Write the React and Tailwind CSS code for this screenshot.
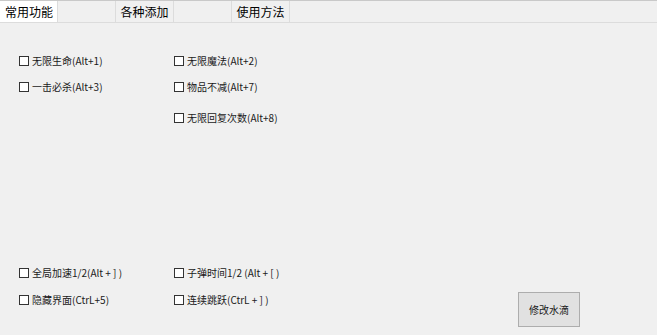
const font = { fontFamily: '"Noto Sans CJK SC", "Noto Sans", sans-serif' }

function Check({ label, className = '' }) {
  return (
    <label
      className={`flex h-[14px] items-center gap-[3px] text-[10px] leading-none text-[#1a1a1a] ${className}`}
    >
      <span className="h-[10px] w-[10px] shrink-0 border border-[#333] bg-white" />
      <span className="whitespace-nowrap">{label}</span>
    </label>
  )
}

const tabs = ['常用功能', '', '各种添加', '', '使用方法']

export default function App() {
  return (
    <div
      className="flex h-[335px] w-[657px] flex-col overflow-hidden bg-[#f0f0f0]"
      style={font}
    >
      <div className="flex h-[23px] shrink-0 border-b border-[#dcdcdc] border-t border-t-[#c9c9c9] bg-[#f0f0f0]">
        {tabs.map((t, i) => (
          <div
            key={i}
            className={`flex h-full w-[58px] items-center border-r border-[#dcdcdc] text-[12px] text-black ${
              i === 0 ? 'bg-white pl-[5px]' : 'justify-center'
            }`}
          >
            {t}
          </div>
        ))}
      </div>

      <div className="flex flex-1 flex-col px-[19px] pt-[31px]">
        <div className="grid grid-cols-[155px_1fr] gap-y-[12px]">
          <Check label="无限生命(Alt+1)" />
          <Check label="无限魔法(Alt+2)" />
          <Check label="一击必杀(Alt+3)" />
          <Check label="物品不减(Alt+7)" />
          <div />
          <Check label="无限回复次数(Alt+8)" className="mt-[5px]" />
        </div>

        <div className="mt-[141px] grid grid-cols-[155px_1fr] gap-y-[13px]">
          <Check label="全局加速1/2(Alt + ] )" />
          <Check label="子弹时间1/2 (Alt + [ )" />
          <Check label="隐藏界面(CtrL+5)" />
          <div className="flex items-start justify-between">
            <Check label="连续跳跃(CtrL + ] )" />
            <button className="mr-[58px] -mt-[1px] h-[35px] w-[62px] border border-[#adadad] bg-[#e1e1e1] text-[10px] text-[#1a1a1a]">
              修改水滴
            </button>
          </div>
        </div>
      </div>
    </div>
  )
}
